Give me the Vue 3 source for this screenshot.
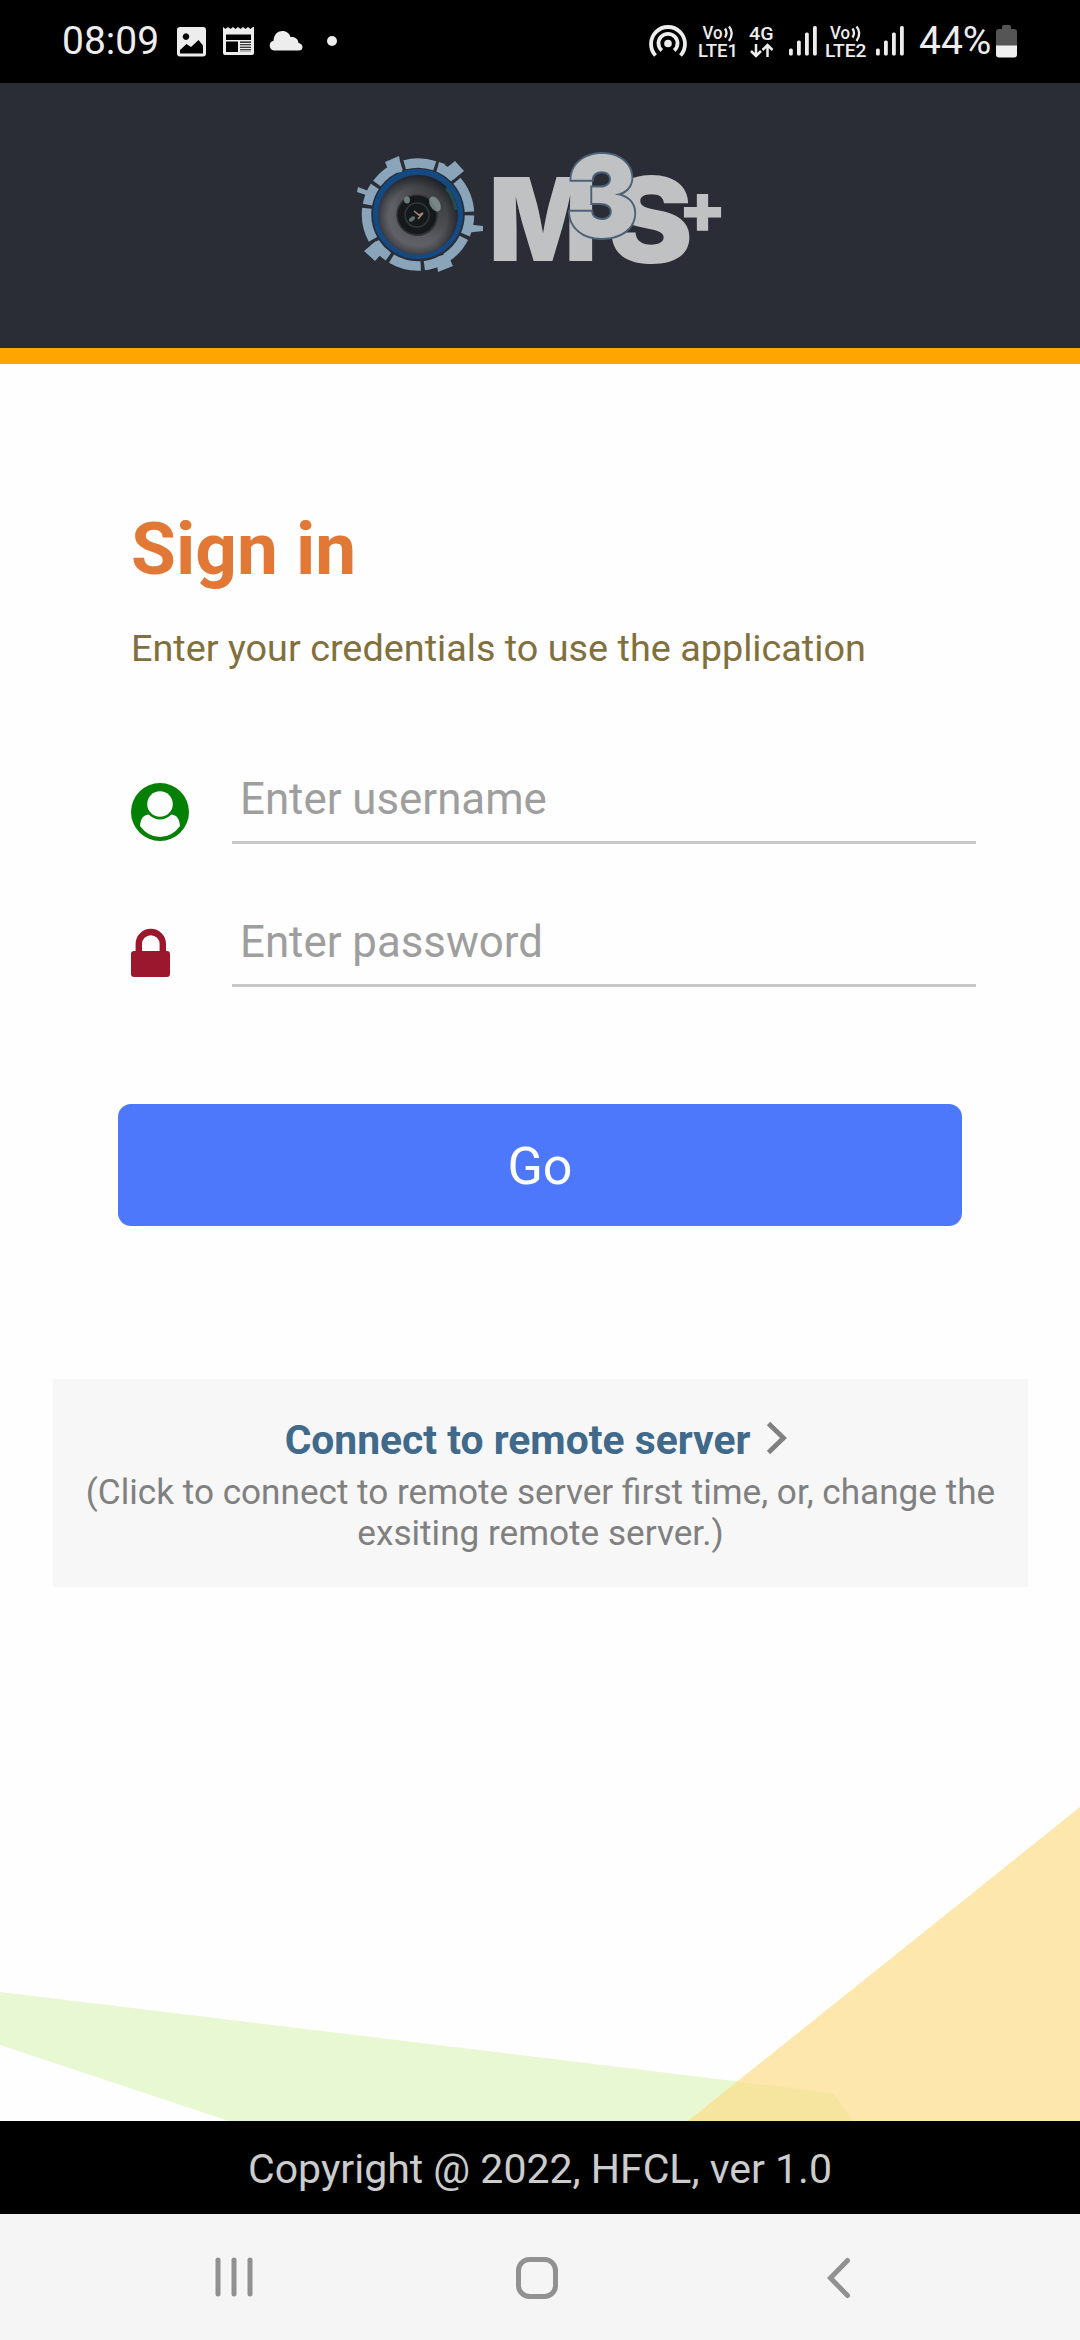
<script setup>
const cells = [0, 1]
const bars = [7, 15, 23, 29.5]
</script>

<template>
  <div class="screen">
    <div class="status">
      <div class="left">
        <span class="clock">08:09</span>
        <svg class="pic" width="30" height="30" viewBox="0 0 30 30">
          <path fill="#ededed" fill-rule="evenodd" d="M3 0H26a3 3 0 0 1 3 3V26.500a3 3 0 0 1-3 3H3a3 3 0 0 1-3-3V3a3 3 0 0 1 3-3ZM9 6.300a3.300 3.300 0 1 0 .01 0ZM3 26.500H26V18.500L21.500 13 14 20 9.500 17 3 23Z" />
        </svg>
        <svg class="news" width="32" height="30" viewBox="0 0 32 30">
          <path fill="#ededed" d="M0 1 2.500 3 5 1 7.500 3 10 1 12.500 3 15 1 17.500 3 20 1 22.500 3 25 1 27.500 3 30 1 31 1V27a2 2 0 0 1-2 2H2a2 2 0 0 1-2-2Z" />
          <path d="M3 8.500H28V14H3ZM3 15.500H15V26H3ZM17 15.500H28V26H17Z" />
          <path stroke="#ededed" stroke-width="1.500" d="M17 17.500H28M17 20H28M17 22.500H28M17 25H28" />
        </svg>
        <svg class="cloud" width="34" height="20" viewBox="0 0 34 20">
          <path fill="#ededed" d="M5 19.500A5 5 0 0 1 4.500 9.700C5 3 9 0 13.500 0c4 0 7 2.500 8 6 5-.5 7.500 2 8 6 2.500.3 4 2 4 4.200 0 2-1.500 3.300-3.500 3.300Z" />
        </svg>
        <i class="dot"></i>
      </div>
      <div class="right">
        <svg class="hotspot" width="38" height="34" viewBox="0 0 38 34" fill="none" stroke="#ededed" stroke-width="3.800">
          <circle cx="19" cy="18.500" r="3.800" fill="#ededed" stroke="none" />
          <path d="M12.800 25.500A9.500 9.500 0 1 1 25.200 25.500" />
          <path d="M6.500 30.500A17 17 0 1 1 31.500 30.500" />
        </svg>
        <svg class="volte" width="42" height="34" viewBox="0 0 42 34" fill="#ededed">
          <text x="3.500" y="14" class="tiny" textLength="20" lengthAdjust="spacingAndGlyphs">Vo</text>
          <path d="M26 3.500Q29 8 26 12.500M30 1.500Q35.500 8 30 16" fill="none" stroke="#ededed" stroke-width="2.300" />
          <text x="-1" y="31.700" class="tiny" textLength="40" lengthAdjust="spacingAndGlyphs">LTE1</text>
        </svg>
        <svg class="gen" width="26" height="34" viewBox="0 0 26 34" fill="#ededed">
          <text x="0" y="15" class="tiny" textLength="24.500" lengthAdjust="spacingAndGlyphs">4G</text>
          <path d="M7 19V31M2 26 7 31 12 26M18.500 32V20M13.500 25 18.500 20 23.500 25" fill="none" stroke="#ededed" stroke-width="2.500" />
        </svg>
        <template v-for="c in cells" :key="c">
          <svg v-if="c" class="volte2" width="42" height="34" viewBox="0 0 42 34" fill="#ededed">
            <text x="4" y="14" class="tiny" textLength="20" lengthAdjust="spacingAndGlyphs">Vo</text>
            <path d="M26.500 3.500Q29.500 8 26.500 12.500M30.500 1.500Q36 8 30.500 16" fill="none" stroke="#ededed" stroke-width="2.300" />
            <text x="-1" y="31.700" class="tiny" textLength="41.500" lengthAdjust="spacingAndGlyphs">LTE2</text>
          </svg>
          <svg class="signal" width="28" height="30" viewBox="0 0 28 30">
            <rect v-for="(h, i) in bars" :key="i" :x="i * 8" :y="29.5 - h" width="3.800" :height="h" rx="1.500" fill="#ededed" />
          </svg>
        </template>
        <span class="pct">44%</span>
        <svg class="battery" width="21" height="33" viewBox="0 0 21 33">
          <path fill="#555" d="M6 2a2 2 0 0 1 2-2h5a2 2 0 0 1 2 2V4h3a3 3 0 0 1 3 3V21H0V7a3 3 0 0 1 3-3H6Z" />
          <path fill="#f0f0f0" d="M0 20.500H21V29.500a3 3 0 0 1-3 3H3a3 3 0 0 1-3-3Z" />
        </svg>
      </div>
    </div>

    <header class="header">
      <svg width="380" height="140" viewBox="350 145 380 140">
        <defs>
          <radialGradient id="lens" cx=".5" cy=".52" r=".52">
            <stop offset="0" stop-color="#14181c" />
            <stop offset=".42" stop-color="#1b1d20" />
            <stop offset=".48" stop-color="#5a5b60" />
            <stop offset=".7" stop-color="#606066" />
            <stop offset=".85" stop-color="#494b51" />
            <stop offset="1" stop-color="#2a303c" />
          </radialGradient>
          <linearGradient id="shade" x1="0" y1="1" x2="1" y2="0">
            <stop offset=".4" stop-color="#111" stop-opacity="0" />
            <stop offset="1" stop-color="#101418" stop-opacity=".75" />
          </linearGradient>
        </defs>
        <circle cx="418" cy="214.500" r="51.500" fill="none" stroke="#8aa4b9" stroke-width="9.500" pathLength="360" stroke-dasharray="34 4 22 4 38 4 22 4 30 4 22 4 34 4 22 4 36 4 22 4 34 4" transform="rotate(-105 418 214.500)" />
        <g fill="#8aa4b9">
          <path d="m385 162 14-6 3 16-12 2ZM455 161l9 10-11 9-8-11ZM376 241l9 9-10 11-11-10ZM436 258l11-5 6 13-15 6ZM358 187l16 6-2 4-15-5ZM465 224l18 2v5l-18 2ZM439 162l6 2-3 8-5-2Z" />
        </g>
        <circle cx="418" cy="214" r="42.500" fill="#24406a" stroke="#144a83" stroke-width="5" />
        <circle cx="418" cy="215" r="40" fill="url(#lens)" />
        <circle cx="418" cy="215" r="40" fill="url(#shade)" />
        <circle cx="417" cy="215" r="20" fill="#15191c" stroke="#303238" stroke-width="1.500" />
        <circle cx="417" cy="215" r="12" fill="none" stroke="#30383b" stroke-width="1.500" />
        <ellipse cx="435" cy="204" rx="5" ry="8" fill="#8d9d9b" opacity=".75" transform="rotate(-30 435 204)" />
        <ellipse cx="407" cy="200" rx="3" ry="3.500" fill="#81938f" opacity=".8" />
        <ellipse cx="412" cy="219" rx="3.500" ry="2" fill="#738680" opacity=".8" transform="rotate(-40 412 219)" />
        <path d="m414 211 5 4 4-2-5 6" fill="none" stroke="#a98a68" stroke-width="1.500" />
        <path d="M446 188q8 9 10 22" fill="none" stroke="#235f5d" stroke-width="3" opacity=".7" />
        <g class="mark" fill="#c0c1c3">
          <text x="488.500" y="261" font-size="115" textLength="109" lengthAdjust="spacingAndGlyphs">M</text>
          <text x="608" y="262.500" font-size="119" textLength="85" lengthAdjust="spacingAndGlyphs">S</text>
          <text x="678" y="233" font-size="70" textLength="49" lengthAdjust="spacingAndGlyphs">+</text>
          <text class="three" x="566" y="237" font-size="113" textLength="72" lengthAdjust="spacingAndGlyphs" stroke="#496278" stroke-width="4">3</text>
        </g>
      </svg>
    </header>

    <main class="body">
      <svg class="shapes" width="1080" height="320" viewBox="0 1801 1080 320">
        <path fill="#e8f8d2" d="M0 1992 833 2093 853 2121H229L0 2045Z" />
        <path fill="#fcdb86" fill-opacity=".68" d="M1080 1807V2121H688Z" />
      </svg>
      <h1>Sign in</h1>
      <p class="sub">Enter your credentials to use the application</p>
      <form class="fields" @submit.prevent>
        <label class="row">
          <svg class="user" width="58" height="58" viewBox="0 0 58 58">
            <circle cx="29" cy="29" r="29" fill="#048104" />
            <path fill="#fff" d="M9 43C9.500 37 11.500 32 17.500 31.500Q29 41.500 40.500 31.500C46.500 32 48.500 37 49 43Q41 54 29 54T9 43Z" />
            <circle cx="29" cy="21" r="12.800" fill="#fff" />
          </svg>
          <input type="text" placeholder="Enter username" />
        </label>
        <label class="row">
          <svg class="lock" width="39" height="48" viewBox="0 0 39 48">
            <path d="M7.800 24V15a12 12 0 0 1 24 0V24" fill="none" stroke="#9a172d" stroke-width="6.400" />
            <rect y="22" width="39" height="26" rx="3" fill="#9a172d" />
          </svg>
          <input type="password" placeholder="Enter password" />
        </label>
      </form>
      <button class="go">Go</button>
      <section class="remote">
        <div class="link">
          <span>Connect to remote server</span>
          <svg width="22" height="34" viewBox="0 0 22 34"><path d="M2.500 2.500 17.500 17 2.500 31.500" fill="none" stroke="#808080" stroke-width="4.800" /></svg>
        </div>
        <p>(Click to connect to remote server first time, or, change the exsiting remote server.)</p>
      </section>
    </main>

    <footer class="copy">Copyright @ 2022, HFCL, ver 1.0</footer>
    <nav class="nav">
      <svg width="40" height="42" viewBox="0 0 40 42"><path d="M3 3V37M19 3V37M35 3V37" stroke="#919191" stroke-width="5" stroke-linecap="round" /></svg>
      <svg class="home" width="42" height="42" viewBox="0 0 42 42"><rect x="2.500" y="2.500" width="37" height="37" rx="11" fill="none" stroke="#919191" stroke-width="5" /></svg>
      <svg width="24" height="42" viewBox="0 0 24 42"><path d="M20.500 3.500 3.500 21 20.500 38.500" fill="none" stroke="#919191" stroke-width="5" stroke-linecap="round" /></svg>
    </nav>
  </div>
</template>

<style>
body { background: #fefefe; }
</style>

<style scoped>
.screen {
  width: 1080px;
  height: 2340px;
  display: flex;
  flex-direction: column;
  background: #fefefe;
  font-family: Roboto, "Noto Sans", sans-serif;
  overflow: hidden;
}
svg { display: block; flex: none; overflow: visible; }
.status {
  height: 83px;
  background: #000;
  color: #ededed;
  display: flex;
  justify-content: space-between;
  align-items: flex-start;
}
.left, .right { display: flex; align-items: flex-start; }
.left { padding-left: 62px; }
.clock, .pct { font-size: 39px; line-height: 46px; margin-top: 18px; white-space: nowrap; }
.clock { width: 98px; margin-right: 17px; }
.pic { margin-top: 27px; margin-right: 16px; }
.news { margin-top: 26px; margin-right: 14px; }
.cloud { margin-top: 31px; margin-right: 24px; }
.dot { width: 10px; height: 10px; border-radius: 50%; background: #ededed; margin-top: 36px; }
.right { padding-right: 63px; }
.right svg { margin-top: 25px; }
.tiny { font: 500 18.500px Roboto, sans-serif; }
.right .hotspot { margin-right: 12px; margin-top: 24.500px; }
.volte { margin-right: 8px; }
.gen { margin-right: 14px; }
.right .signal { margin-top: 26px; }
.signal { margin-right: 9px; }
.volte2 { margin-right: 8px; }
.volte2 + .signal { margin-right: 8px; }
.pct { width: 69px; margin-left: 7px; margin-right: 8px; }

.header {
  box-sizing: border-box;
  height: 281px;
  background: #2a2d36;
  border-bottom: 16px solid #ffa502;
  padding: 62px 0 0 350px;
}
.mark text { font-family: Inter, "Liberation Sans", sans-serif; font-weight: 900; }
.three { paint-order: stroke; }

.body {
  position: relative;
  height: 1757px;
  display: flex;
  flex-direction: column;
}
.shapes { position: absolute; left: 0; bottom: 0; }
h1 {
  margin: 143px 0 0 131px;
  font-size: 73px;
  line-height: 84px;
  color: #e27836;
  font-weight: 700;
}
.sub { margin: 33px 0 0 131px; font-size: 37.800px; line-height: 48px; color: #82703c; }
.fields { margin: 84px 0 0 131px; }
.row { display: flex; width: 845px; height: 88px; margin-bottom: 55px; }
.user { margin: 27px 43px 0 0; }
.lock { margin: 30px 62px 0 0; }
input {
  box-sizing: border-box;
  width: 744px;
  height: 88px;
  padding: 0 8px;
  border: 0;
  border-bottom: 3px solid #c8c8c8;
  background: none;
  font: 43.800px Roboto, sans-serif;
  outline: 0;
}
input::placeholder { color: #9e9e9e; opacity: 1; }
.go {
  margin: 62px 0 0 118px;
  width: 844px;
  height: 122px;
  border: 0;
  border-radius: 13px;
  background: #4e78fc;
  color: #fff;
  padding: 3px 0 0;
  font: 52px Roboto, sans-serif;
}
.remote {
  margin: 153px 0 0 53px;
  box-sizing: border-box;
  width: 975px;
  height: 208px;
  padding: 37px 20px 0;
  background: #f7f7f7;
  text-align: center;
}
.link {
  display: flex;
  justify-content: center;
  gap: 16px;
  padding-right: 8px;
  font-size: 40.800px;
  line-height: 48px;
  font-weight: 700;
  color: #40698a;
}
.link svg { margin-top: 5px; }
.remote p { margin: 8px 0 0; font-size: 35.150px; line-height: 41px; color: #808080; }
.copy {
  height: 93px;
  background: #000;
  color: #ccc;
  text-align: center;
  font-size: 41px;
  line-height: 96px;
}
.nav {
  height: 126px;
  background: #f5f5f5;
  display: flex;
  justify-content: space-between;
  align-items: center;
  padding: 2px 229px 0 215px;
  box-sizing: border-box;
}
.home { margin-right: 9px; }
</style>
